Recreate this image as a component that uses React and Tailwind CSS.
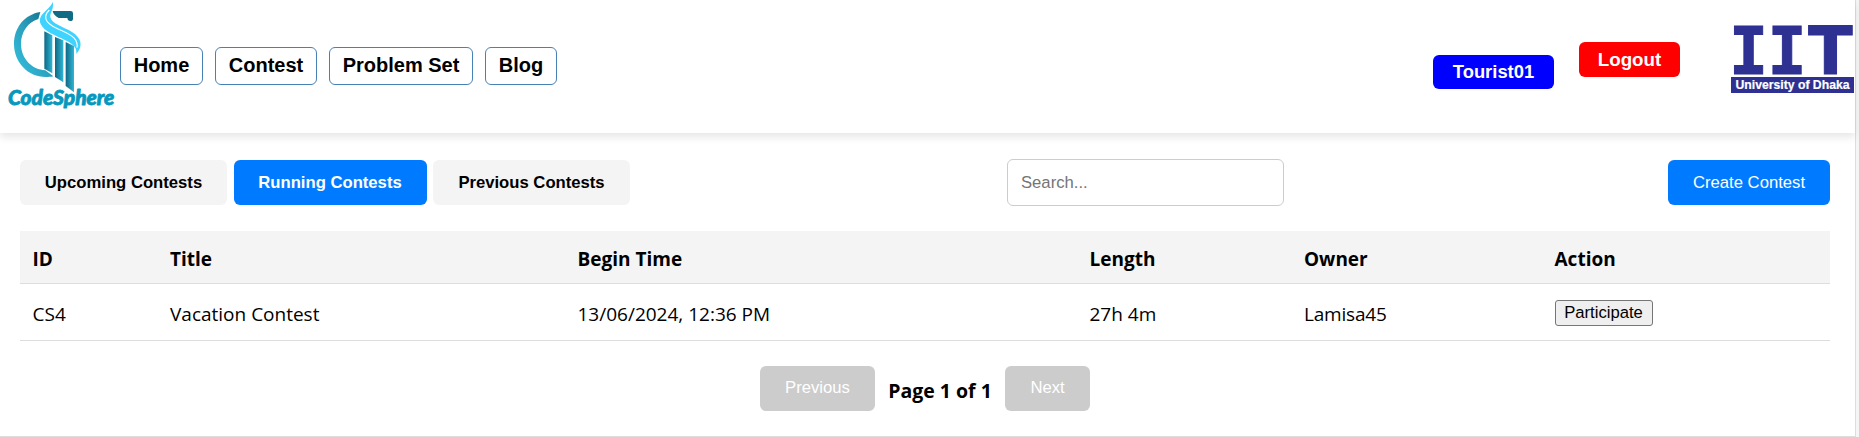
import React from "react";

const navItems = [
  { label: "Home", width: "w-[83px]" },
  { label: "Contest", width: "w-[102px]" },
  { label: "Problem Set", width: "w-[144px]" },
  { label: "Blog", width: "w-[72px]" },
];

const tabs = [
  { label: "Upcoming Contests", style: "w-[207px] bg-[#f4f4f4] text-black" },
  { label: "Running Contests", style: "w-[193px] bg-[#007bff] text-white" },
  { label: "Previous Contests", style: "w-[197px] bg-[#f4f4f4] text-black" },
];

const columns = "grid grid-cols-[137.5px_407.5px_512px_214.5px_250.5px_1fr] pl-[12.5px]";

function CodeSphereLogo() {
  return (
    <svg viewBox="0 0 375 375" className="h-[125px] w-[125px] shrink-0">
      <defs>
        <linearGradient id="ring" x1="0" y1="1" x2="1" y2="0">
          <stop offset="0" stopColor="#35c3e3" />
          <stop offset="0.5" stopColor="#2a9fbd" />
          <stop offset="1" stopColor="#0d647f" />
        </linearGradient>
        <linearGradient id="pillar" x1="0" y1="0" x2="1" y2="0">
          <stop offset="0" stopColor="#0e6884" />
          <stop offset="1" stopColor="#30b6d6" />
        </linearGradient>
      </defs>
      <path d="M121 36C75 43 42 82 42 132C42 187 84 231 137 231C145 231 152 231 160 229L136 211C96 209 63 176 63 132C63 96 84 66 115 57Z" fill="url(#ring)" />
      <path d="M158 33H212Q219 33 219 40V56Q219 63 211 63Q203 63 202 54H176Q160 45 158 33Z" fill="#106b84" />
      <path d="M133 94L157 106V220L133 206Z" fill="url(#pillar)" />
      <path d="M165 111L190 121V247L165 231Z" fill="url(#pillar)" />
      <path d="M197 126L222 138V277L197 258Z" fill="url(#pillar)" />
      <path d="M158 5C163 27 149 38 151 51C154 72 191 80 216 96C245 114 250 139 229 162C231 143 221 133 199 122C164 105 132 94 122 72C110 41 151 30 158 5Z" fill="#3fd3ff" />
      <path d="M148 30C130 48 136 63 153 75C174 90 205 97 221 113C231 123 233 132 231 143" fill="none" stroke="#fff" strokeWidth="3.5" />
      <text x="24" y="314" textLength="319" lengthAdjust="spacingAndGlyphs" strokeWidth="2.5" strokeLinejoin="round" className="fill-[#0798bd] stroke-[#0798bd] font-['Lato',sans-serif] text-[60px] font-black italic">
        CodeSphere
      </text>
    </svg>
  );
}

function InstituteLogo() {
  return (
    <svg viewBox="0 0 124 70" className="h-[70px] w-[124px] shrink-0 overflow-visible" fill="#2e3192">
      <g stroke="#2e3192" strokeWidth="1">
        <text x="-1.9" y="47.5" className="font-['DejaVu_Sans_Mono',monospace] text-[65px] font-bold">I</text>
        <text x="36.4" y="47.5" className="font-['DejaVu_Sans_Mono',monospace] text-[65px] font-bold">I</text>
        <text x="77.2" y="47.5" className="font-['DejaVu_Sans',sans-serif] text-[65px] font-bold">T</text>
      </g>
      <rect x="0" y="51" width="123" height="16" />
      <text x="4.5" y="63" textLength="114" lengthAdjust="spacingAndGlyphs" fill="#fff" stroke="#fff" strokeWidth="0.2" className="font-['Liberation_Sans',sans-serif] text-[13px] font-bold">
        University of Dhaka
      </text>
    </svg>
  );
}

export default function App() {
  return (
    <div className="flex h-[437px] w-full overflow-hidden bg-[#f5f5f5] text-black">
      <div className="flex w-[1856px] flex-col border-r border-b border-[#dddddd] bg-white font-['Liberation_Sans',sans-serif]">
        <header className="flex h-[133px] shrink-0 items-start bg-white shadow-[0_4px_8px_rgba(0,0,0,0.1)]">
          <CodeSphereLogo />
          <nav className="-ml-[5px] mt-[47px] flex gap-3">
            {navItems.map((item) => (
              <a key={item.label} className={`${item.width} h-[38px] rounded-[6px] border border-[#4682b4] text-center text-[20px] leading-[35px] font-bold`}>
                {item.label}
              </a>
            ))}
          </nav>
          <div className="ml-auto flex items-start">
            <a className="mt-[55px] h-[34px] w-[121px] rounded-[6px] bg-[#0000ff] text-center text-[18.4px] leading-[33px] font-bold text-white">Tourist01</a>
            <button className="mt-[42px] ml-[25px] h-[35px] w-[101px] rounded-[6px] bg-[#ff0000] text-[18.75px] leading-[35px] font-bold text-white">Logout</button>
            <div className="mt-[26px] ml-[51px]">
              <InstituteLogo />
            </div>
          </div>
        </header>

        <main className="px-5 pt-[26px] pr-[25px]">
          <div className="flex h-[47px] items-center">
            <div className="flex gap-[6.5px]">
              {tabs.map((tab) => (
                <button key={tab.label} className={`${tab.style} h-[45px] rounded-[6px] text-[16.67px] font-bold whitespace-nowrap`}>
                  {tab.label}
                </button>
              ))}
            </div>
            <input placeholder="Search..." className="ml-[377px] h-[47px] w-[277px] rounded-[6px] border border-[#cccccc] px-[13px] text-[16.67px] placeholder:text-[#757575]" />
            <button className="ml-auto h-[45px] w-[162px] rounded-[6px] bg-[#007bff] text-[16.67px] text-white">Create Contest</button>
          </div>

          <section className="mt-[25px] font-['Open_Sans','Noto_Sans',sans-serif] text-[19px]">
            <div className={`${columns} h-[53px] items-center border-b border-[#dddddd] bg-[#f4f4f4] pt-[5px] font-bold`}>
              <span>ID</span>
              <span>Title</span>
              <span>Begin Time</span>
              <span>Length</span>
              <span>Owner</span>
              <span>Action</span>
            </div>
            <div className={`${columns} h-[57px] items-center border-b border-[#dddddd] pt-[5px]`}>
              <span>CS4</span>
              <span>Vacation Contest</span>
              <span>13/06/2024, 12:36 PM</span>
              <span>27h 4m</span>
              <span className="tracking-[-0.2px]">Lamisa45</span>
              <button className="mb-[3px] h-[26px] w-[98px] rounded-[3px] border border-[#767676] bg-[#efefef] font-['Liberation_Sans',sans-serif] text-[16.67px] leading-[24px]">Participate</button>
            </div>
          </section>

          <footer className="mt-[25px] flex h-[45px] pl-[740px]">
            <button className="w-[115px] rounded-[6px] bg-[#cccccc] pb-[3px] text-[16.67px] text-white">Previous</button>
            <span className="w-[130px] pt-1 text-center font-['Open_Sans','Noto_Sans',sans-serif] text-[19.5px] leading-[41px] font-bold">Page 1 of 1</span>
            <button className="w-[85px] rounded-[6px] bg-[#cccccc] pb-[3px] text-[16.67px] text-white">Next</button>
          </footer>
        </main>
      </div>
    </div>
  );
}
